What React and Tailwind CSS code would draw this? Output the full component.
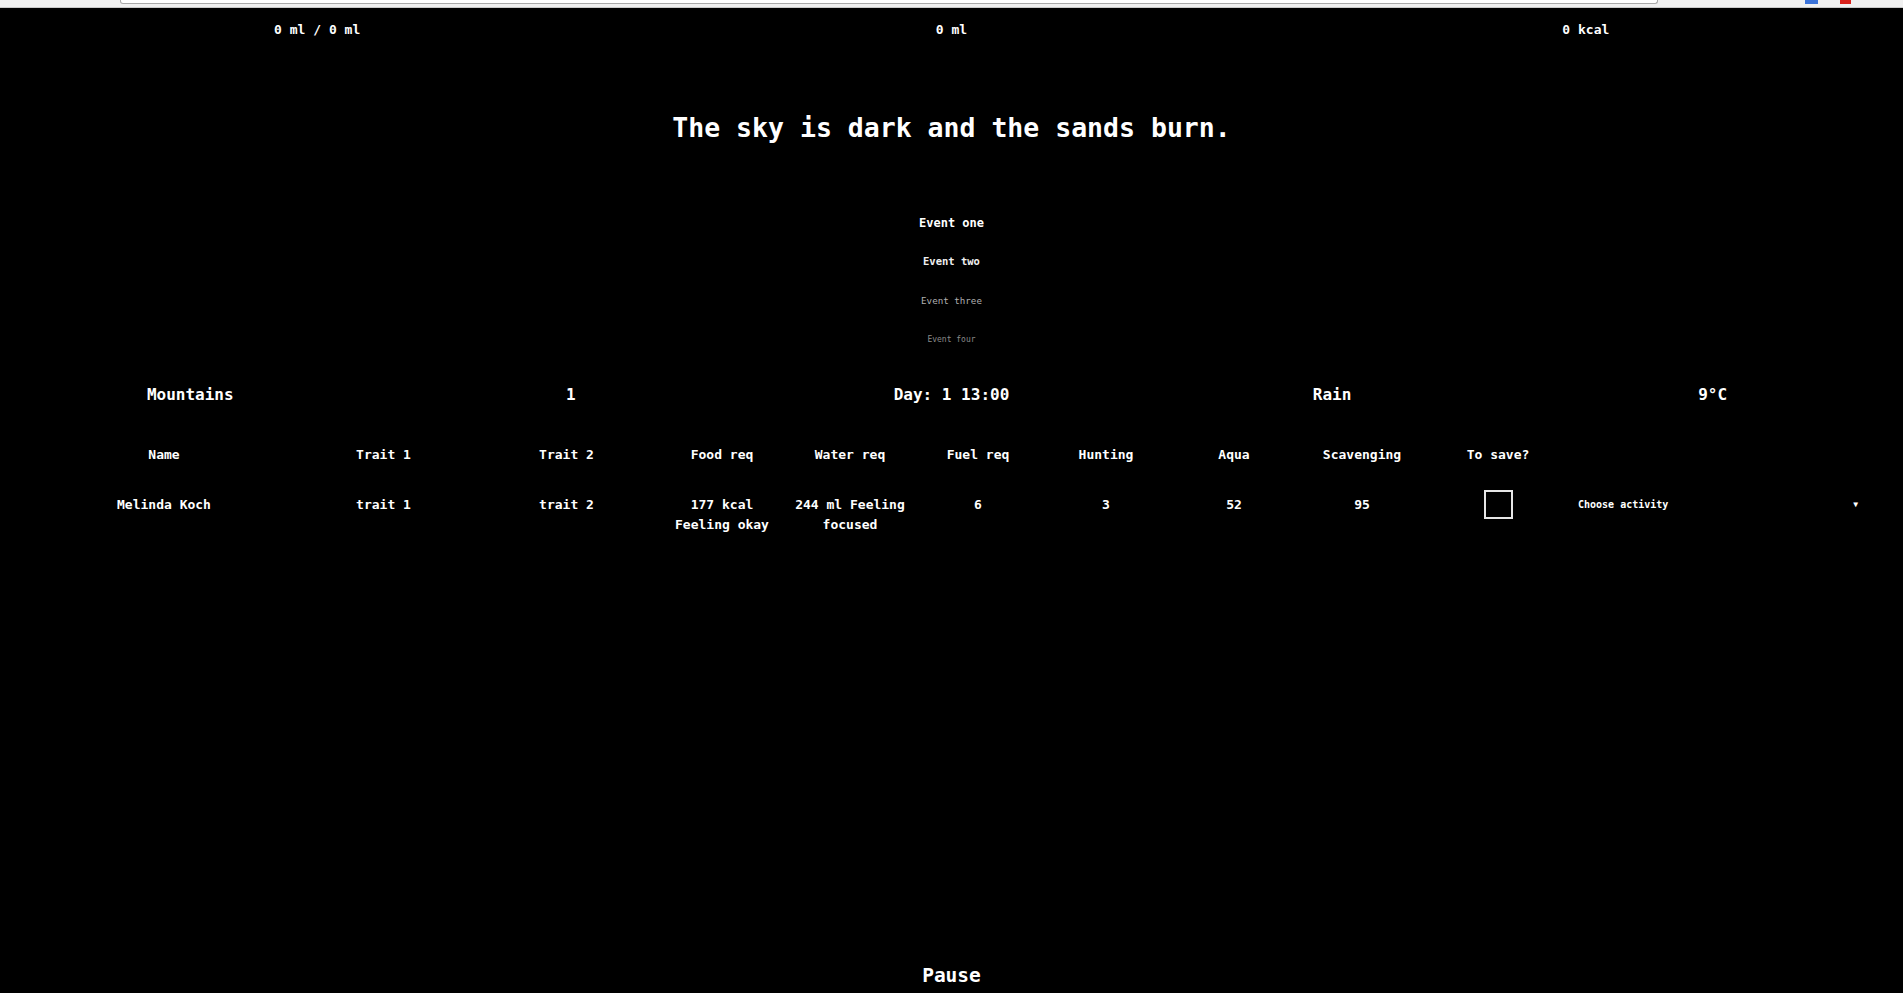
import React from "react";

const mono = { fontFamily: '"DejaVu Sans Mono", "Liberation Mono", monospace' };

export default function App() {
  return (
    <div className="min-h-screen w-full bg-black text-white flex flex-col" style={mono}>
      {/* browser chrome strip */}
      <div className="h-[8px] bg-[#f0f0f0] border-b border-[#c9c9c9] flex items-start shrink-0">
        <div className="ml-[120px] w-[1538px] h-[4px] bg-white border border-t-0 border-[#a9a9a9] rounded-b-[3px]" />
        <div className="ml-[147px] w-[13px] h-[4px] bg-[#3b73d9]" />
        <div className="ml-[22px] w-[11px] h-[4px] bg-[#d9221c]" />
      </div>

      {/* stats */}
      <div className="grid grid-cols-3 pt-[14px] text-[13px] leading-[16px] font-bold text-center">
        <div>0 ml / 0 ml</div>
        <div>0 ml</div>
        <div>0 kcal</div>
      </div>

      {/* title */}
      <h1 className="mt-[74px] text-center text-[26.5px] leading-[32px] font-bold">
        The sky is dark and the sands burn.
      </h1>

      {/* events */}
      <div className="mt-[59px] flex flex-col items-center font-bold">
        <div className="h-[39px] flex items-center text-[12px] text-white">Event one</div>
        <div className="h-[39px] flex items-center text-[10.5px] text-[#f0f0f0]">Event two</div>
        <div className="h-[39px] flex items-center text-[9.2px] font-normal text-[#b0b0b0]">Event three</div>
        <div className="h-[39px] flex items-center text-[8px] font-normal text-[#8a8a8a]">Event four</div>
      </div>

      {/* info row */}
      <div className="mt-[24px] grid grid-cols-5 text-center text-[16px] leading-[24px] font-bold">
        <div>Mountains</div>
        <div>1</div>
        <div>Day: 1 13:00</div>
        <div>Rain</div>
        <div>9°C</div>
      </div>

      {/* table */}
      <div className="mt-[38px] pl-[36px] text-[13px] leading-[20px] font-bold">
        <div className="grid grid-cols-[256px_183px_183px_128px_128px_128px_128px_128px_128px_144px_300px] text-center">
          <div>Name</div>
          <div>Trait 1</div>
          <div>Trait 2</div>
          <div>Food req</div>
          <div>Water req</div>
          <div>Fuel req</div>
          <div>Hunting</div>
          <div>Aqua</div>
          <div>Scavenging</div>
          <div>To save?</div>
          <div></div>
        </div>
        <div className="mt-[30px] grid grid-cols-[256px_183px_183px_128px_128px_128px_128px_128px_128px_144px_300px] text-center items-start">
          <div>Melinda Koch</div>
          <div>trait 1</div>
          <div>trait 2</div>
          <div className="px-2">177 kcal Feeling okay</div>
          <div className="px-2">244 ml Feeling focused</div>
          <div>6</div>
          <div>3</div>
          <div>52</div>
          <div>95</div>
          <div className="flex justify-center -mt-[5px]">
            <div className="w-[29px] h-[29px] border-2 border-[#e6e6e6] bg-black" />
          </div>
          <div className="flex items-center justify-between pl-[8px] pr-[12px] h-[20px] text-[10px] text-left">
            <span>Choose activity</span>
            <span className="text-[8px]">▼</span>
          </div>
        </div>
      </div>

      {/* pause */}
      <div className="mt-auto pb-[5px] text-center text-[19.5px] leading-[24px] font-bold">
        Pause
      </div>
    </div>
  );
}
